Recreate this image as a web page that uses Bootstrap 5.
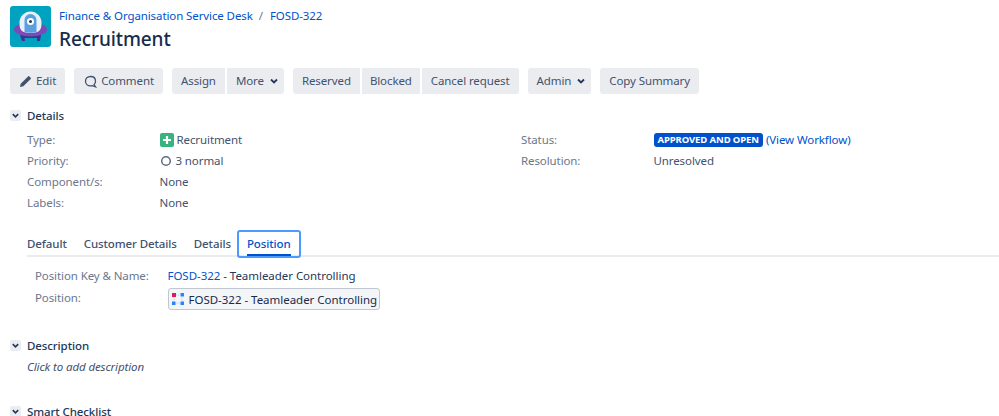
<!DOCTYPE html>
<html lang="en">
<head>
<meta charset="utf-8">
<title>Recruitment</title>
<link href="https://cdn.jsdelivr.net/npm/bootstrap@5.3.0/dist/css/bootstrap.min.css" rel="stylesheet">
<style>
html,body{height:416px;overflow:hidden;background:#fff}
body{font-family:"Noto Sans",sans-serif;font-size:11.5px;letter-spacing:-.1px;line-height:21px;color:#253858}
a{color:#0052cc;text-decoration:none}
.page-wrap{padding:6px 0 0 10px}
.app-logo{width:41px;height:41px;flex:none;display:block}
.head-text{margin-left:8px}
.crumbs{height:20px;line-height:20px;color:#6b778c}
.crumbs .sep{margin:0 7px 0 6px}
.issue-title{font-size:19px;line-height:26px;font-weight:500;color:#172b4d;margin:0;letter-spacing:-.1px}
.tool-bar{margin-top:16px;height:26px}
.tbtn{background:#ebecf0;color:#42526e;height:26px;line-height:26px;padding:0 9px;border-radius:3px;display:flex;align-items:center;white-space:nowrap}
.tbtn.has-ico{padding-left:10px}
.tbtn.has-caret{padding-right:5px}
.tbtn-ico{display:block;margin-right:4px}
.tbtn-caret{display:block;margin-left:5px}
.tbtn.slim{padding:0 8px}
.tgrp{display:flex;gap:2px;margin-right:9px}
.tgrp .tbtn{border-radius:0}
.tgrp .tbtn:first-child{border-radius:3px 0 0 3px}
.tgrp .tbtn:last-child{border-radius:0 3px 3px 0}
.solo{margin-right:9px}
.sec-head{height:21px;line-height:21px;font-weight:500;color:#253858}
.twist{width:11px;height:11px;background:#ebecf0;border-radius:2px;margin-right:6px;display:flex;align-items:center;justify-content:center;flex:none}
.sec-details{margin-top:11px}
.fields{margin-top:3px;padding-left:17px;display:flex}
.fcol{width:494px}
.frow{display:flex;height:21px;line-height:21px}
.flabel{width:132.500px;color:#6b778c}
.fval{display:flex;align-items:center;color:#42526e}
.type-ico{width:14px;height:14px;margin-right:3px;display:block}
.prio-ico{width:12px;height:12px;margin:0 4px 0 0;display:block}
.status-pill{background:#0052cc;color:#fff;font-size:9.500px;font-weight:700;line-height:14px;height:14px;padding:0 4px;border-radius:3px;margin-right:3px;white-space:nowrap}
.tab-line{margin-top:17px;margin-left:17px;height:27px;border-bottom:2px solid #ebecf0;display:flex;position:relative;font-weight:500;color:#42526e}
.tabx{padding:0;margin-right:17px;height:27px;line-height:27px}
.tabx.on{position:relative;color:#0052cc;margin:0 0 0 -11px;border:2px solid #4c9aff;border-radius:3px;height:28px;line-height:23px;padding:0 8px}
.tabx.on::after{content:"";position:absolute;left:8px;right:8px;bottom:0;height:2px;background:#0052cc}
.pos-block{padding-left:25px;margin-top:8px}
.pos-block .fval{color:#253858;letter-spacing:-.04px}
.pos-row2{height:24px;margin-top:1px}
.pos-chip{display:flex;align-items:center;border:1px solid #c1c7d0;border-radius:3px;background:#f4f5f7;height:22px;padding:0 2px 0 3px;color:#172b4d;margin-top:1px;white-space:nowrap;letter-spacing:-.02px}
.pos-ico{width:12px;height:12px;margin-right:5px;display:block}
.sec-desc{margin-top:24px}
.desc-txt{padding-left:17px;font-style:italic;color:#42526e;height:21px}
.sec-smart{margin-top:24px}
</style>
</head>
<body>
<div class="page-wrap">
  <div class="d-flex">
    <svg class="app-logo" viewBox="0 0 41 41" aria-hidden="true">
      <rect width="41" height="41" rx="3" fill="#00a3bf"/>
      <path d="M10 29h4l1 6h-3zM27 29h4l-1 6h-3z" fill="#403294"/>
      <path d="M11 29h19v3H11z" fill="#403294"/>
      <ellipse cx="20.500" cy="23.500" rx="16.500" ry="7" fill="#7a4bb8"/>
      <path d="M9.500 17a11 11.500 0 0 1 22 0c0 6-1 10-11 10s-11-4-11-10z" fill="#e9f0fa"/>
      <path d="M14.500 26V14a6 6 0 0 1 12 0v12q-6 1.500-12 0z" fill="#5b9fe0"/>
      <circle cx="20.500" cy="15.500" r="3.500" fill="#fff"/>
      <circle cx="20.500" cy="15.500" r="1.500" fill="#253858"/>
    </svg>
    <div class="head-text">
      <div class="crumbs"><a href="#">Finance &amp; Organisation Service Desk</a><span class="sep">/</span><a href="#">FOSD-322</a></div>
      <h1 class="issue-title">Recruitment</h1>
    </div>
  </div>

  <div class="d-flex tool-bar">
    <div class="tbtn solo has-ico"><svg class="tbtn-ico" width="12" height="12" viewBox="0 0 12 12"><path d="M0 12l.7-3.300L8 1.400a1 1 0 0 1 1.400 0l1.300 1.300a1 1 0 0 1 0 1.400L3.300 11.300z" fill="#42526e"/></svg>Edit</div>
    <div class="tbtn solo has-ico"><svg class="tbtn-ico" width="13" height="13" viewBox="0 0 13 13"><path d="M6.500 1.500c3 0 5 2 5 4.700 0 1.400-.5 2.500-1.400 3.300l1.400 2.300-3-1.200c-.6.200-1.300.3-2 .3-3 0-5-2-5-4.700s2-4.700 5-4.700z" fill="none" stroke="#42526e" stroke-width="1.300"/></svg>Comment</div>
    <div class="tgrp">
      <div class="tbtn">Assign</div>
      <div class="tbtn has-caret">More<svg class="tbtn-caret" width="10" height="10" viewBox="0 0 10 10"><path d="M2 3.500l3 3 3-3" fill="none" stroke="#253858" stroke-width="1.800"/></svg></div>
    </div>
    <div class="tgrp">
      <div class="tbtn">Reserved</div>
      <div class="tbtn slim">Blocked</div>
      <div class="tbtn">Cancel request</div>
    </div>
    <div class="tbtn solo has-caret">Admin<svg class="tbtn-caret" width="10" height="10" viewBox="0 0 10 10"><path d="M2 3.500l3 3 3-3" fill="none" stroke="#253858" stroke-width="1.800"/></svg></div>
    <div class="tbtn">Copy Summary</div>
  </div>

  <div class="d-flex align-items-center sec-head sec-details"><span class="twist"><svg width="9" height="9" viewBox="0 0 10 10"><path d="M2 3.500l3 3 3-3" fill="none" stroke="#253858" stroke-width="1.800"/></svg></span>Details</div>
  <div class="fields">
    <div class="fcol">
      <div class="frow"><div class="flabel">Type:</div><div class="fval"><svg class="type-ico" viewBox="0 0 14 14"><rect width="14" height="14" rx="2" fill="#36b37e"/><path d="M7 3v8M3 7h8" stroke="#fff" stroke-width="2.200"/></svg>Recruitment</div></div>
      <div class="frow"><div class="flabel">Priority:</div><div class="fval"><svg class="prio-ico" viewBox="0 0 12 12"><circle cx="6" cy="6" r="4.300" fill="none" stroke="#5e6c84" stroke-width="1.500"/></svg>3 normal</div></div>
      <div class="frow"><div class="flabel">Component/s:</div><div class="fval">None</div></div>
      <div class="frow"><div class="flabel">Labels:</div><div class="fval">None</div></div>
    </div>
    <div>
      <div class="frow"><div class="flabel">Status:</div><div class="fval"><span class="status-pill">APPROVED AND OPEN</span><a href="#">(View Workflow)</a></div></div>
      <div class="frow"><div class="flabel">Resolution:</div><div class="fval">Unresolved</div></div>
    </div>
  </div>

  <div class="tab-line">
    <div class="tabx">Default</div>
    <div class="tabx">Customer Details</div>
    <div class="tabx">Details</div>
    <div class="tabx on">Position</div>
  </div>

  <div class="pos-block">
    <div class="frow"><div class="flabel">Position Key &amp; Name:</div><div class="fval"><a href="#">FOSD-322</a>&nbsp;- Teamleader Controlling</div></div>
    <div class="frow pos-row2"><div class="flabel">Position:</div><div class="pos-chip"><svg class="pos-ico" viewBox="0 0 12 12"><rect x="0" y="0" width="4" height="4" fill="#de1b5d"/><rect x="8.500" y="0" width="3.500" height="3.500" fill="#2684ff"/><rect x="0" y="8.500" width="3.500" height="3.500" fill="#2684ff"/><rect x="8.500" y="8.500" width="3.500" height="3.500" fill="#2684ff"/><path d="M4 2H8.500M2 4V8.500M10 3.500V8.500M3.500 10H8.500" stroke="#8fc1ff" stroke-width=".8" stroke-dasharray="1 1"/></svg>FOSD-322 - Teamleader Controlling</div></div>
  </div>

  <div class="d-flex align-items-center sec-head sec-desc"><span class="twist"><svg width="9" height="9" viewBox="0 0 10 10"><path d="M2 3.500l3 3 3-3" fill="none" stroke="#253858" stroke-width="1.800"/></svg></span>Description</div>
  <div class="desc-txt">Click to add description</div>
  <div class="d-flex align-items-center sec-head sec-smart"><span class="twist"><svg width="9" height="9" viewBox="0 0 10 10"><path d="M2 3.500l3 3 3-3" fill="none" stroke="#253858" stroke-width="1.800"/></svg></span>Smart Checklist</div>
</div>
<script src="https://cdn.jsdelivr.net/npm/bootstrap@5.3.0/dist/js/bootstrap.bundle.min.js"></script>
</body>
</html>
